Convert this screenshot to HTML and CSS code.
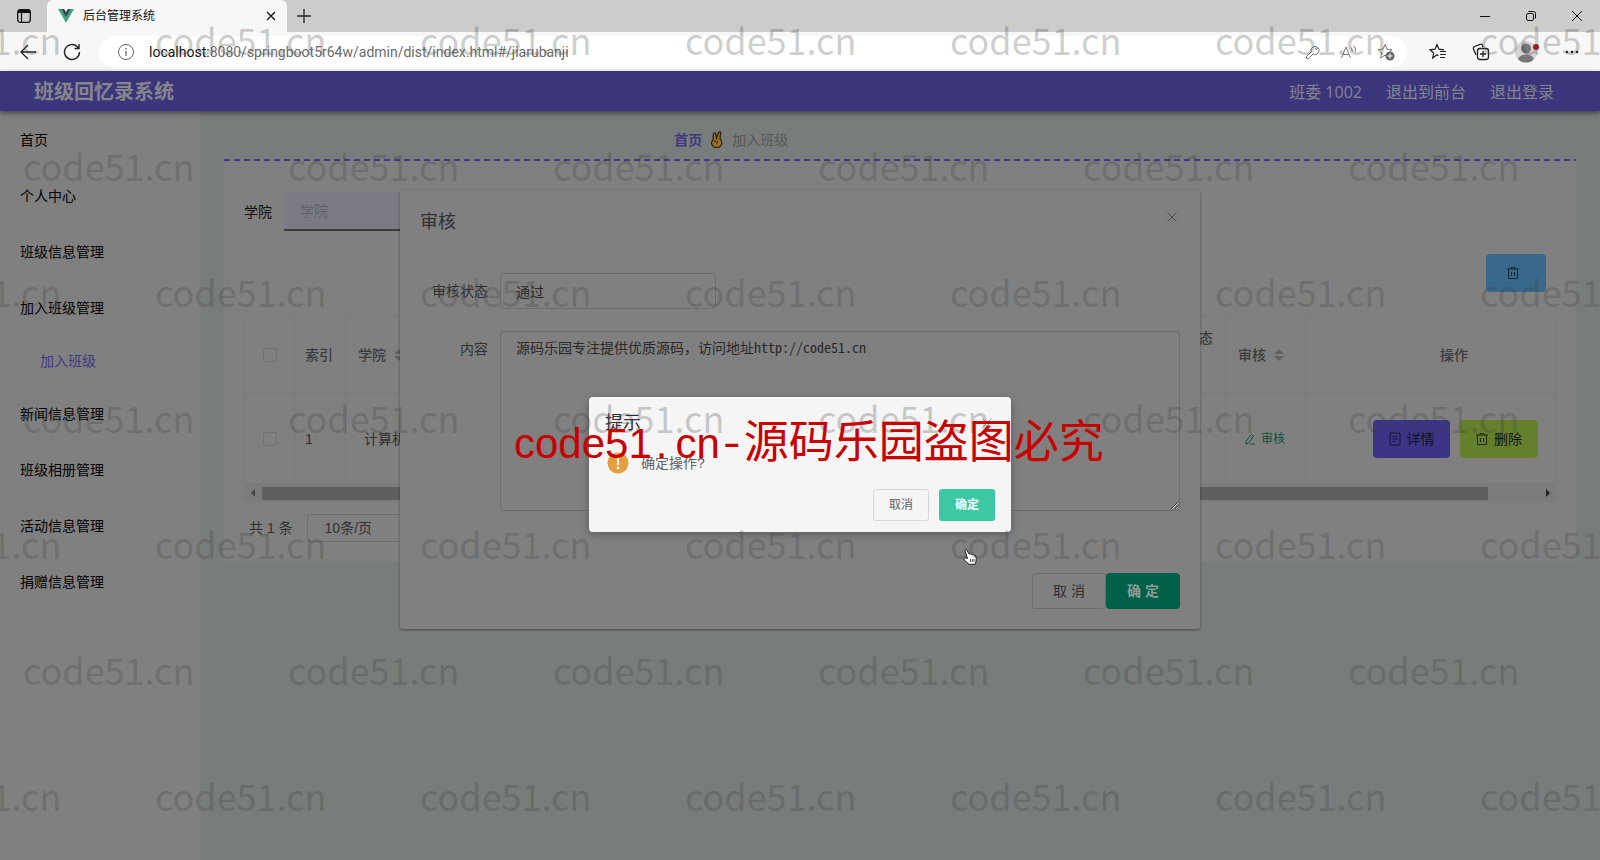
FILE: index.html
```html
<!DOCTYPE html>
<html lang="zh-CN">
<head>
<meta charset="utf-8">
<title>后台管理系统</title>
<link rel="stylesheet" href="styles.css">
</head>
<body>
<div class="tabstrip">
  <button class="ico tabmenu" aria-label="标签菜单"><svg width="16" height="16" viewBox="0 0 16 16"><rect x="1.7" y="1.7" width="12.6" height="12.6" rx="2.5" fill="none" stroke="#111" stroke-width="1.3"/><path d="M2 2h12v3H2z" fill="#111"/><path d="M5.5 5v9" stroke="#111" stroke-width="1.2"/></svg></button>
  <div class="tab">
    <svg width="16" height="14" viewBox="0 0 16 14"><path d="M0 0h3.4L8 7.8 12.600 0H16L8 13.800z" fill="#41a57c"/><path d="M3.200 0h3L8 3l1.800-3h3L8 8.200z" fill="#35495e"/></svg>
    <span class="tabname">后台管理系统</span>
    <button class="ico" aria-label="关闭标签"><svg width="12" height="12" viewBox="0 0 12 12"><path d="M2 2l8 8M10 2l-8 8" stroke="#111" stroke-width="1.2"/></svg></button>
  </div>
  <button class="ico newtab" aria-label="新标签"><svg width="16" height="16" viewBox="0 0 16 16"><path d="M8 1v14M1 8h14" stroke="#222" stroke-width="1.300"/></svg></button>
  <div class="winctl">
    <button class="ico" aria-label="最小化"><svg width="12" height="12" viewBox="0 0 12 12"><path d="M1 6.500h10" stroke="#111"/></svg></button>
    <button class="ico" aria-label="还原"><svg width="12" height="12" viewBox="0 0 12 12" fill="none" stroke="#111"><rect x="1.500" y="3.500" width="7" height="7" rx="1.500"/><path d="M3.500 1.500h5a2 2 0 0 1 2 2v5"/></svg></button>
    <button class="ico" aria-label="关闭"><svg width="12" height="12" viewBox="0 0 12 12"><path d="M1 1l10 10M11 1L1 11" stroke="#111"/></svg></button>
  </div>
</div>
<div class="toolbar">
  <button class="ico back" aria-label="后退"><svg width="18" height="18" viewBox="0 0 18 18" fill="none" stroke="#222" stroke-width="1.300"><path d="M17 9H2M9 2L2 9l7 7"/></svg></button>
  <button class="ico reload" aria-label="刷新"><svg width="18" height="18" viewBox="0 0 18 18" fill="none" stroke="#222" stroke-width="1.400"><path d="M16.500 9a7.500 7.500 0 1 1-2.200-5.300L16 5.500M16 1v4.500h-4.500"/></svg></button>
  <div class="address">
    <svg width="18" height="18" viewBox="0 0 18 18" fill="none" stroke="#666"><circle cx="9" cy="9" r="7.500"/><path d="M9 8v5M9 5v1.500" stroke-width="1.300"/></svg>
    <span class="url"><b>localhost:</b>8080/springboot5r64w/admin/dist/index.html#/jiarubanji</span>
    <svg width="16" height="16" viewBox="0 0 16 16" fill="none" stroke="#777"><path d="M8 10L3.500 14.500H1.500v-2L6.200 7.800a4 4 0 1 1 1.800 2.200z"/><circle cx="11.300" cy="4.700" r=".8"/></svg>
    <svg width="18" height="16" viewBox="0 0 18 16" fill="none" stroke="#777"><path d="M1.500 14L6 3l4.500 11M3 10.500h6M11 3.500q1.500 1.500 1.200 4M13.500 1.500q2.500 2.500 2 6"/></svg>
    <svg width="18" height="18" viewBox="0 0 18 18"><path d="M8 1.500l2 4.700 5 .4-3.700 3.400L12.500 15 8 12.300 3.500 15l1.200-5L1 6.600l5-.4z" fill="none" stroke="#777"/><circle cx="13" cy="13" r="4.500" fill="#666"/><path d="M13 10.500v5M10.500 13h5" stroke="#fff"/></svg>
  </div>
  <div class="tools">
    <button class="ico" aria-label="收藏夹"><svg width="18" height="18" viewBox="0 0 18 18" fill="none" stroke="#222" stroke-width="1.200"><path d="M9.500 12.700L7.800 11.800 3.700 15l1-5L1 6.800l5-.6L8 1.500l2 4.700 5 .6M11 8.500h6M11 11.500h6M11 14.500h5"/></svg></button>
    <button class="ico" aria-label="集锦"><svg width="18" height="18" viewBox="0 0 18 18" fill="none" stroke="#222" stroke-width="1.300"><path d="M4 12L1.500 6a2 2 0 0 1 1-2.500L8 1.300a2 2 0 0 1 2.500 1L11 4"/><rect x="5.500" y="5.500" width="11" height="11" rx="2.500"/><path d="M11 8v6M8 11h6"/></svg></button>
    <button class="ico" aria-label="用户"><svg width="24" height="24" viewBox="0 0 24 24"><circle cx="11" cy="12" r="11" fill="#d3d3d3"/><circle cx="11" cy="8.500" r="5" fill="#777"/><path d="M3 19q2-4.500 8-4.500t8 4.500q-3 3.500-8 3.500T3 19z" fill="#777"/><circle cx="21" cy="7" r="3" fill="#b3141b"/></svg></button>
    <button class="ico" aria-label="更多"><svg width="16" height="6" viewBox="0 0 16 6" fill="#222"><circle cx="3" cy="3" r="1.300"/><circle cx="8" cy="3" r="1.300"/><circle cx="13" cy="3" r="1.300"/></svg></button>
  </div>
</div>

<header class="head">
  <h1 class="brand">班级回忆录系统</h1>
  <nav class="usernav"><span>班委 1002</span><a href="#">退出到前台</a><a href="#">退出登录</a></nav>
</header>

<div class="body">
  <nav class="side">
    <a href="#">首页</a>
    <a href="#">个人中心</a>
    <a href="#">班级信息管理</a>
    <a href="#">加入班级管理</a>
    <a class="sub" href="#">加入班级</a>
    <a href="#">新闻信息管理</a>
    <a href="#">班级相册管理</a>
    <a href="#">活动信息管理</a>
    <a href="#">捐赠信息管理</a>
  </nav>
  <main class="main">
    <div class="crumb">
      <a href="#">首页</a>
      <svg width="14" height="18" viewBox="0 0 14 18"><path d="M3 9L3.500 2.500q1-1.500 2 0L6.500 7 8.500 1.500q1.500-1.300 2.200.3L10 8q2 1 1.800 4-.5 4.500-5 4.700Q2 16.500 1.500 12q0-2 1.500-3z" fill="#98701f" stroke="#2b2008" stroke-width="1.200"/><path d="M4 11q2-2 4 0l-2 2" fill="none" stroke="#3a2b0a"/></svg>
      <span>加入班级</span>
    </div>
    <section class="card">
      <div class="search"><label for="xy">学院</label><input id="xy" type="text" placeholder="学院"></div>
      <div class="acts"><button class="btn bulk" aria-label="批量删除"><svg width="14" height="14" viewBox="0 0 14 14" fill="none" stroke="#12242f"><path d="M1 3h12M5 3V1.500h4V3M2.500 3v9.500h9V3M5.500 6v4M8.500 6v4"/></svg></button></div>
      <table class="grid">
        <colgroup><col class="c1"><col class="c2"><col class="c3"><col><col class="c5"><col class="c6"></colgroup>
        <tr class="hrow">
          <th><input type="checkbox" aria-label="全选"></th>
          <th>索引</th>
          <th><span class="sortable">学院<svg width="10" height="14" viewBox="0 0 10 14" fill="#606164"><path d="M0 6l5-5 5 5zM0 8l5 5 5-5z"/></svg></span></th>
          <th class="state">审核状态</th>
          <th><span class="sortable">审核<svg width="10" height="14" viewBox="0 0 10 14" fill="#606164"><path d="M0 6l5-5 5 5zM0 8l5 5 5-5z"/></svg></span></th>
          <th class="ops">操作</th>
        </tr>
        <tr class="drow">
          <td><input type="checkbox" aria-label="选择第1行"></td>
          <td>1</td>
          <td class="col">计算机</td>
          <td></td>
          <td><button class="audit"><svg width="12" height="12" viewBox="0 0 12 12" fill="none" stroke="#0a5541"><path d="M2 8.500L7 1.500l2.500 1.800-5 7L2 11zM6 11h5"/></svg>审核</button></td>
          <td><div class="rowbtns">
            <button class="btn detail"><svg width="12" height="14" viewBox="0 0 12 14" fill="none" stroke="#15132f"><path d="M1 1h10v12H1zM3.500 4.500h5M3.500 7h5M3.500 9.500h3"/></svg>详情</button>
            <button class="btn del"><svg width="12" height="14" viewBox="0 0 12 14" fill="none" stroke="#20280f"><path d="M0 3h12M4 3V1.500h4V3M1.500 3v9.500h9V3M4.500 6v4M7.500 6v4"/></svg>删除</button>
          </div></td>
        </tr>
      </table>
      <div class="scroll"><svg width="6" height="8" viewBox="0 0 6 8"><path d="M5 0v8L1 4z" fill="#444"/></svg><div class="track"><div class="thumb"></div></div><svg width="6" height="8" viewBox="0 0 6 8"><path d="M1 0v8l4-4z" fill="#222"/></svg></div>
      <div class="pager"><span>共 1 条</span><select aria-label="每页条数"><option>10条/页</option></select></div>
    </section>
  </main>
</div>

<div class="dialog" role="dialog" aria-label="审核">
  <div class="dhead"><h2>审核</h2><button class="ico" aria-label="关闭对话框"><svg width="12" height="12" viewBox="0 0 12 12"><path d="M1.500 1.500l9 9M10.500 1.500l-9 9" stroke="#4a4b4d"/></svg></button></div>
  <div class="field"><label for="zt">审核状态</label><select id="zt"><option>通过</option></select></div>
  <div class="field"><label for="nr">内容</label><textarea id="nr">源码乐园专注提供优质源码，访问地址http://code51.cn</textarea></div>
  <div class="dfoot"><button class="plain">取 消</button><button class="ok">确 定</button></div>
</div>

<div class="msg" role="alertdialog" aria-label="提示">
  <div class="mhead"><h2>提示</h2><button class="ico" aria-label="关闭提示"><svg width="12" height="12" viewBox="0 0 12 12"><path d="M1.500 1.500l9 9M10.500 1.500l-9 9" stroke="#909399"/></svg></button></div>
  <div class="mbody"><svg width="22" height="22" viewBox="0 0 22 22"><circle cx="11" cy="11" r="10.500" fill="#e2a03f"/><path d="M11 5v7.500" stroke="#fff" stroke-width="2" stroke-linecap="round"/><circle cx="11" cy="16" r="1.300" fill="#fff"/></svg><span>确定操作?</span></div>
  <div class="mfoot"><button class="plain">取消</button><button class="ok">确定</button></div>
</div>

<svg class="cursor" width="16" height="20" viewBox="0 0 16 20"><path d="M5.500 11.500L3 3.500q0-1.600 1.500-1.200L7 7l1.400-.3 1 .8 1.500-.2 1 1 1.600.3.8 3-.3 2.800-1 2.900H7L2 12.700q-.8-1.700 1-1.900z" fill="#fff" stroke="#222"/><path d="M8.500 12v3M10.300 12v3M12 12v3" stroke="#222" stroke-width=".8"/></svg>

<div class="marks" aria-hidden="true">
  <div class="mrow odd"><span>code51.cn</span><span>code51.cn</span><span>code51.cn</span><span>code51.cn</span><span>code51.cn</span><span>code51.cn</span><span>code51.cn</span></div>
  <div class="mrow"><span>code51.cn</span><span>code51.cn</span><span>code51.cn</span><span>code51.cn</span><span>code51.cn</span><span>code51.cn</span></div>
  <div class="mrow odd"><span>code51.cn</span><span>code51.cn</span><span>code51.cn</span><span>code51.cn</span><span>code51.cn</span><span>code51.cn</span><span>code51.cn</span></div>
  <div class="mrow"><span>code51.cn</span><span>code51.cn</span><span>code51.cn</span><span>code51.cn</span><span>code51.cn</span><span>code51.cn</span></div>
  <div class="mrow odd"><span>code51.cn</span><span>code51.cn</span><span>code51.cn</span><span>code51.cn</span><span>code51.cn</span><span>code51.cn</span><span>code51.cn</span></div>
  <div class="mrow"><span>code51.cn</span><span>code51.cn</span><span>code51.cn</span><span>code51.cn</span><span>code51.cn</span><span>code51.cn</span></div>
  <div class="mrow odd"><span>code51.cn</span><span>code51.cn</span><span>code51.cn</span><span>code51.cn</span><span>code51.cn</span><span>code51.cn</span><span>code51.cn</span></div>
</div>
<div class="banner"><span class="latin">code51<span class="dot">.</span>cn</span><span class="dash">-</span><span>源码乐园盗图必究</span></div>
</body>
</html>
```
FILE: styles.css
```css
* { box-sizing: border-box; }
body {
  margin: 0;
  min-height: 100vh;
  display: flex;
  flex-direction: column;
  position: relative;
  overflow: hidden;
  font: 14px/20px "Liberation Sans", "Noto Sans CJK SC", sans-serif;
  background: #787c7b;
  color: #303133;
}
button, input, select, textarea { font: inherit; color: inherit; }
button { cursor: pointer; padding: 0; border: 0; background: none; }
a { color: inherit; text-decoration: none; }
h1, h2 { margin: 0; font-weight: 400; }
svg { display: block; flex: none; }
.ico { display: flex; align-items: center; justify-content: center; }

/* Browser frame */
.tabstrip { height: 32px; display: flex; align-items: center; background: #ccc; }
.tabmenu { width: 47px; }
.tab { width: 240px; height: 32px; padding: 0 10px 0 11px; display: flex; align-items: center; gap: 9px; background: #f7f7f7; border-radius: 6px 6px 0 0; color: #111; font-size: 12px; }
.tabname { flex: 1; }
.newtab { margin-left: 9px; }
.winctl { margin-left: auto; padding-right: 17px; display: flex; gap: 34px; }
.toolbar { height: 39px; display: flex; align-items: center; background: #f7f7f7; }
.back { margin-left: 19px; }
.reload { margin-left: 26px; }
.address { flex: 1; height: 32px; margin-left: 18px; padding: 0 12px 0 18px; display: flex; align-items: center; gap: 19px; background: #fff; border-radius: 16px; }
.url { flex: 1; margin-left: -5px; font: 14px/20px Roboto, "Open Sans", sans-serif; color: #6b6b6b; }
.url b { font-weight: 400; color: #111; }
.tools { display: flex; align-items: center; gap: 25px; padding: 0 20px 0 22px; }

/* Page header */
.head { height: 40px; padding: 2px 46px 0 34px; display: flex; align-items: center; justify-content: space-between; position: relative; background: #3b367c; color: #85858c; box-shadow: 0 2px 5px rgba(0, 0, 0, .5); }
.brand { font-size: 20px; line-height: 38px; font-weight: 700; }
.usernav { display: flex; gap: 24px; font: 16px/20px "Open Sans", "Noto Sans CJK SC", sans-serif; }

.body { flex: 1; display: flex; }
.side { width: 200px; padding-top: 1px; display: flex; flex-direction: column; background: #808080; color: #000; }
.side a { padding-left: 20px; line-height: 56px; }
.side .sub { padding-left: 40px; line-height: 50px; color: #3f3a85; }

.main { flex: 1; padding: 0 24px; }
.crumb { height: 50px; padding: 8px 0 0 33%; display: flex; align-items: center; gap: 8px; color: #56585c; background: repeating-linear-gradient(90deg, #3f3a85 0 6px, transparent 6px 10px) left bottom / 100% 2px no-repeat; }
.crumb a { margin-left: 4px; color: #3f3a85; font-weight: 700; }
.card { min-height: 400px; padding: 31px 20px 18px; background: #808080; }
.search { display: flex; align-items: center; gap: 12px; color: #111; }
.search input { width: 200px; height: 39px; padding: 0 16px; border: 0; border-bottom: 2px solid #3d3d3d; background: #7c7b85; }
.search input::placeholder { color: #62636a; opacity: 1; }
.acts { display: flex; justify-content: flex-end; padding: 23px 10px 24px 0; }
.btn { display: flex; align-items: center; justify-content: center; gap: 6px; height: 38px; border-radius: 4px; }
.bulk { width: 60px; padding-right: 6px; background: #38698a; }

.grid { width: 100%; table-layout: fixed; border-collapse: collapse; color: #303134; }
.grid th, .grid td { border: 1px solid #797979; padding: 0 12px; text-align: left; font-weight: 400; }
.grid th { color: #3c3d40; font-weight: 500; }
.grid input { appearance: none; display: block; width: 14px; height: 14px; margin: 0 6px; border: 1px solid #717273; border-radius: 2px; }
.grid .hrow { height: 77px; }
.grid .drow { height: 90px; }
.c1 { width: 50px; }
.c2 { width: 51px; }
.c3 { width: 100px; }
.c5 { width: 80px; }
.c6 { width: 250px; }
.grid th:nth-child(2), .grid td:nth-child(2) { padding: 0 10px; }
.grid th.state { text-align: right; vertical-align: top; padding-top: 11px; }
.grid th.ops { padding-left: 134px; }
.grid td.col { padding-left: 18px; }
.sortable { display: flex; align-items: center; gap: 8px; }
.audit { display: flex; align-items: center; gap: 5px; margin-left: 6px; font-size: 12px; color: #0a5541; }
.rowbtns { display: flex; gap: 10px; margin-left: 55px; color: #111; }
.detail { width: 77px; background: #3c3587; }
.del { width: 78px; background: #667f2c; }
.scroll { display: flex; align-items: center; gap: 6px; height: 18px; padding: 0 5px 0 6px; background: #7b7b7b; }
.track { flex: 1; }
.thumb { width: 96%; height: 13px; background: #5f5f5f; }
.pager { display: flex; align-items: center; gap: 14px; padding: 12px 0 0 5px; }
.pager select { width: 100px; height: 28px; padding: 0 17px; appearance: none; border: 1px solid #6c6d70; border-radius: 3px; background: #808080; }

/* Audit dialog */
.dialog { position: absolute; left: 25%; top: 190px; width: 50%; padding: 20px 20px; background: #808080; border-radius: 2px; box-shadow: 0 1px 3px rgba(0, 0, 0, .4); color: #303133; }
.dhead, .mhead { display: flex; justify-content: space-between; }
.dhead h2, .mhead h2 { font-size: 18px; line-height: 24px; }
.dhead { padding-right: 2px; margin-bottom: 39px; }
.dhead .ico { height: 14px; }
.field { display: flex; gap: 12px; margin-bottom: 22px; line-height: 36px; }
.field label { width: 68px; text-align: right; }
.field select { width: 216px; height: 36px; padding: 0 15px; appearance: none; border: 1px solid #6c6d70; border-radius: 4px; color: #28292b; background: none; }
.field textarea { flex: 1; height: 180px; padding: 5px 15px; border: 1px solid #6c6d70; border-radius: 4px; background: none; color: #28292b; font: 14px/20px "Noto Sans Mono CJK SC", "Liberation Sans", "Noto Sans CJK SC", monospace; }
.dfoot { display: flex; justify-content: flex-end; padding-top: 40px; }
.plain { border: 1px solid #6c6d70; border-radius: 3px; }
.dfoot .plain, .dfoot .ok { width: 74px; height: 36px; }
.dfoot .ok { background: #006148; color: #8c9c96; border-radius: 4px; font-weight: 700; }

/* Confirm box */
.msg { position: absolute; left: 589px; top: 397px; width: 422px; padding: 14px 16px 11px; background: #f5f5f5; border-radius: 4px; color: #303133; box-shadow: 0 2px 8px rgba(0, 0, 0, .3); }
.mhead { padding-right: 2px; }
.mbody { display: flex; align-items: center; gap: 12px; padding: 17px 2px 15px; color: #606266; }
.mfoot { display: flex; justify-content: flex-end; gap: 10px; font-size: 12px; }
.mfoot button { width: 56px; height: 32px; }
.mfoot .plain { border-color: #d5d7dc; color: #606266; }
.mfoot .ok { background: #3bc8a3; color: #fff; border-radius: 3px; font-weight: 700; }

.cursor { position: absolute; left: 962px; top: 547px; }

/* Repeated watermark */
.marks { position: absolute; inset: 0; overflow: hidden; padding-top: 9px; pointer-events: none; color: rgba(60, 60, 60, .25); font: 36px/60px "Noto Sans CJK SC", sans-serif; }
.mrow { display: flex; height: 126px; padding-left: 23px; }
.mrow.odd { margin-left: -133px; }
.mrow span { width: 265px; flex: none; }
.banner { position: absolute; left: 514px; top: 409px; display: flex; align-items: baseline; color: #c80000; font: 45px/60px "Noto Sans Mono CJK SC", "Noto Sans CJK SC", sans-serif; white-space: nowrap; pointer-events: none; }
.latin { font: 42px/60px "Liberation Sans", sans-serif; }
.dot { padding: 0 8px 0 4px; }
.dash { width: 24px; text-align: center; }
```
